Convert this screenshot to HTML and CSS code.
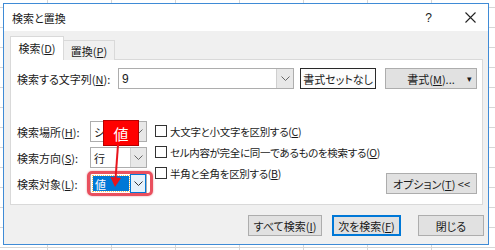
FILE: index.html
```html
<!DOCTYPE html>
<html lang="ja">
<head>
  <meta charset="UTF-8">
  <title>検索と置換</title>
  <link rel="stylesheet" href="styles.css">
</head>
<body>
  <div class="dialog">
    <div class="titlebar">
      <span class="title">検索と置換</span>
      <span class="help">?</span>
      <span class="close">
        <svg width="11" height="11" viewBox="0 0 11 11"><path d="M0.5 0.5 L10.5 10.5 M10.5 0.5 L0.5 10.5" stroke="#222" stroke-width="1.1"/></svg>
      </span>
    </div>

    <div class="main">
      <div class="tabs">
        <div class="tab active">検索(<u>D</u>)</div>
        <div class="tab">置換(<u>P</u>)</div>
      </div>

      <div class="panel">
        <div class="row-find">
          <label class="find-label">検索する文字列(<u>N</u>):</label>
          <div class="combo find-combo">
            <span class="combo-text">9</span>
            <span class="combo-btn"><svg width="9" height="5" viewBox="0 0 9 5"><path d="M0.5 0.5 L4.5 4.5 L8.5 0.5" fill="none" stroke="#666"/></svg></span>
          </div>
          <button class="btn btn-dark">書式セットなし</button>
          <button class="btn btn-format">書式(<u>M</u>)...<span class="caret">▾</span></button>
        </div>

        <div class="options">
          <div class="opt-left">
            <div class="opt-row">
              <label class="opt-label">検索場所(<u>H</u>):</label>
              <div class="combo small-combo">
                <span class="combo-text">シート</span>
                <span class="combo-btn"><svg width="9" height="5" viewBox="0 0 9 5"><path d="M0.5 0.5 L4.5 4.5 L8.5 0.5" fill="none" stroke="#666"/></svg></span>
              </div>
            </div>
            <div class="opt-row">
              <label class="opt-label">検索方向(<u>S</u>):</label>
              <div class="combo small-combo">
                <span class="combo-text">行</span>
                <span class="combo-btn"><svg width="9" height="5" viewBox="0 0 9 5"><path d="M0.5 0.5 L4.5 4.5 L8.5 0.5" fill="none" stroke="#666"/></svg></span>
              </div>
            </div>
            <div class="opt-row">
              <label class="opt-label">検索対象(<u>L</u>):</label>
              <div class="combo small-combo focused">
                <span class="combo-text"><span class="selected">値</span></span>
                <span class="combo-btn"><svg width="9" height="5" viewBox="0 0 9 5"><path d="M0.5 0.5 L4.5 4.5 L8.5 0.5" fill="none" stroke="#333"/></svg></span>
              </div>
            </div>
          </div>

          <div class="opt-checks">
            <div class="check"><span class="box"></span>大文字と小文字を区別する(<u>C</u>)</div>
            <div class="check"><span class="box"></span>セル内容が完全に同一であるものを検索する(<u>O</u>)</div>
            <div class="check"><span class="box"></span>半角と全角を区別する(<u>B</u>)</div>
          </div>

          <button class="btn btn-options">オプション(<u>T</u>) &lt;&lt;</button>
        </div>
      </div>

      <div class="footer">
        <button class="btn btn-all">すべて検索(<u>I</u>)</button>
        <button class="btn btn-next">次を検索(<u>F</u>)</button>
        <button class="btn btn-close">閉じる</button>
      </div>
    </div>
  </div>

  <!-- annotation over the dialog -->
  <div class="highlight"></div>
  <div class="callout">値</div>
  <svg class="arrow" width="20" height="50" viewBox="0 0 20 50">
    <path d="M11 0 L8.5 34" stroke="#e8141c" stroke-width="2" fill="none"/>
    <polygon points="3.5,32 14,33 8,42" fill="#e8141c"/>
  </svg>
</body>
</html>
```

FILE: styles.css
```css
* {
  box-sizing: border-box;
}

body {
  margin: 0;
  width: 495px;
  height: 250px;
  overflow: hidden;
  position: relative;
  font-family: "Noto Sans CJK JP", "Noto Sans", sans-serif;
  font-size: 11px;
  font-feature-settings: "palt";
  color: #1a1a1a;
  background-color: #fff;
  background-image:
    linear-gradient(to right, #d6d6d6 1px, transparent 1px),
    linear-gradient(to bottom, #d6d6d6 1px, transparent 1px);
  background-size: 64px 20px;
  background-position: 47px 0, 0 7px;
}

u {
  text-decoration-thickness: 1px;
  text-underline-offset: 1px;
}

.dialog {
  margin: 3px 0 0 3px;
  width: 486px;
  height: 242px;
  border: 1px solid #3f8bd6;
  background: #f0f0f0;
  display: flex;
  flex-direction: column;
}

.titlebar {
  height: 27px;
  background: #fff;
  display: flex;
  align-items: center;
  padding-left: 8px;
}

.title {
  font-size: 11px;
}

.help {
  margin-left: auto;
  font-family: "Liberation Sans", sans-serif;
  font-size: 12px;
}

.close {
  display: flex;
  margin-left: 33px;
  margin-right: 12px;
}

.main {
  flex: 1;
  padding: 6px 5px 0 6px;
}

.tabs {
  display: flex;
  align-items: flex-end;
  height: 23px;
  margin-bottom: -1px;
  position: relative;
  z-index: 1;
}

.tab {
  height: 20px;
  width: 51px;
  border: 1px solid #d9d9d9;
  border-left: none;
  border-bottom: none;
  background: #f0f0f0;
  display: flex;
  align-items: center;
  justify-content: center;
}

.tab.active {
  height: 24px;
  width: 54px;
  border-left: 1px solid #d9d9d9;
  background: #fff;
  padding-bottom: 2px;
}

.panel {
  width: 473px;
  height: 146px;
  border: 1px solid #d9d9d9;
  background: #fff;
  padding: 8px 5px 0 6px;
}

.row-find {
  display: flex;
  align-items: center;
  height: 21px;
}

.find-label {
  width: 101px;
  flex-shrink: 0;
}

.combo {
  display: flex;
  flex-shrink: 0;
  height: 21px;
  border: 1px solid #adadad;
  background: #fff;
}

.combo-text {
  flex: 1;
  padding-left: 3px;
  display: flex;
  align-items: center;
  overflow: hidden;
  white-space: nowrap;
}

.combo-btn {
  width: 17px;
  background: #e8e8e8;
  border-left: 1px solid #cfcfcf;
  display: flex;
  align-items: center;
  justify-content: center;
}

.find-combo {
  width: 176px;
}

.find-combo .combo-text {
  font-family: "Liberation Sans", sans-serif;
  font-size: 12px;
}

.btn {
  font: inherit;
  color: inherit;
  height: 21px;
  padding: 0;
  flex-shrink: 0;
  white-space: nowrap;
  border: 1px solid #adadad;
  background: #e1e1e1;
  display: flex;
  align-items: center;
  justify-content: center;
}

.btn-dark {
  width: 76px;
  margin-left: 6px;
  border-color: #2a2a2a;
  background: #fcfcfc;
}

.btn-format {
  width: 92px;
  margin-left: 9px;
  position: relative;
}

.caret {
  position: absolute;
  right: 4px;
  top: 3px;
  font-size: 9px;
}

.options {
  display: flex;
  margin-top: 32px;
}

.opt-left {
  display: flex;
  flex-direction: column;
  flex-shrink: 0;
  gap: 5px;
}

.opt-row {
  display: flex;
  align-items: center;
  height: 21px;
}

.opt-label {
  width: 73px;
  white-space: nowrap;
}

.small-combo {
  width: 57px;
}

.small-combo .combo-btn {
  width: 16px;
}

.focused .combo-text {
  padding: 2px 1px 2px 2px;
}

.selected {
  display: flex;
  align-items: center;
  width: 100%;
  height: 100%;
  padding-left: 2px;
  background: #0078d7;
  color: #fff;
  outline: 1px dotted #f0c060;
}

.focused .combo-btn {
  background: #e5f1fb;
  border: 1px solid #0078d7;
}

.opt-checks {
  display: flex;
  flex-direction: column;
  flex: 1;
  min-width: 0;
  gap: 1px;
  margin-left: 8px;
  font-size: 10.5px;
  letter-spacing: -0.3px;
}

.check {
  display: flex;
  align-items: center;
  height: 20px;
  white-space: nowrap;
}

.box {
  width: 12px;
  height: 12px;
  flex-shrink: 0;
  border: 1px solid #333;
  background: #fff;
  margin-right: 3px;
}

.btn-options {
  width: 91px;
  align-self: flex-end;
}

.footer {
  display: flex;
  justify-content: flex-end;
  margin-top: 10px;
  margin-right: -1px;
}

.btn-all {
  width: 74px;
}

.btn-next {
  width: 69px;
  margin-left: 10px;
  border: 2px solid #0078d7;
}

.btn-close {
  width: 66px;
  margin-left: 17px;
}

.highlight {
  position: absolute;
  left: 87px;
  top: 171px;
  width: 66px;
  height: 25px;
  border: 3px solid #e9505e;
  border-radius: 5px;
  box-shadow: 0 0 2px rgba(200, 40, 50, 0.5);
}

.callout {
  position: absolute;
  left: 103px;
  top: 120px;
  width: 36px;
  height: 26px;
  background: #ff0000;
  border: 1px solid #b40000;
  color: #fff;
  font-size: 15px;
  display: flex;
  align-items: center;
  justify-content: center;
}

.arrow {
  position: absolute;
  left: 107px;
  top: 145px;
}
```
